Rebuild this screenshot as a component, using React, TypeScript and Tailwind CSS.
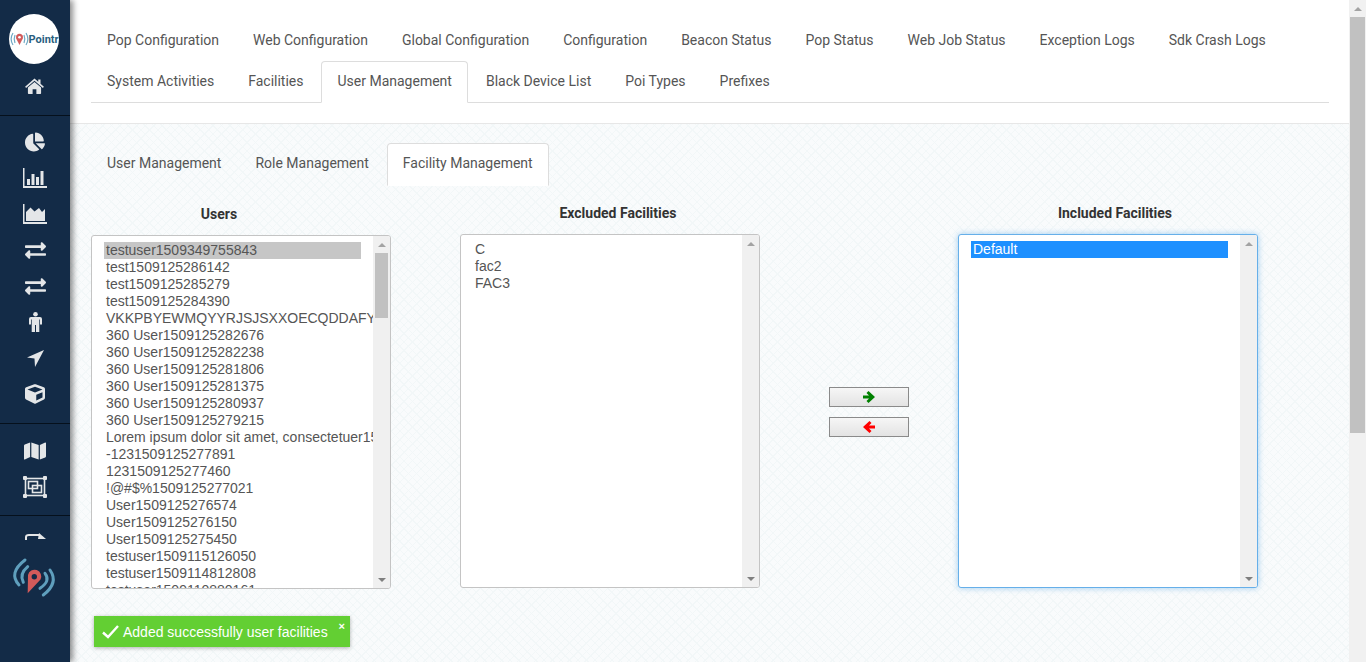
import { FaChartPie, FaCube, FaExchangeAlt, FaMap } from "react-icons/fa";

const mainTabs = [
  ["Pop Configuration", "Web Configuration", "Global Configuration", "Configuration", "Beacon Status", "Pop Status", "Web Job Status", "Exception Logs", "Sdk Crash Logs"],
  ["System Activities", "Facilities", "User Management", "Black Device List", "Poi Types", "Prefixes"],
];

const users = [
  "testuser1509349755843",
  "test1509125286142",
  "test1509125285279",
  "test1509125284390",
  "VKKPBYEWMQYYRJSJSXXOECQDDAFYZW",
  "360 User1509125282676",
  "360 User1509125282238",
  "360 User1509125281806",
  "360 User1509125281375",
  "360 User1509125280937",
  "360 User1509125279215",
  "Lorem ipsum dolor sit amet, consectetuer1509125278",
  "-1231509125277891",
  "1231509125277460",
  "!@#$%1509125277021",
  "User1509125276574",
  "User1509125276150",
  "User1509125275450",
  "testuser1509115126050",
  "testuser1509114812808",
  "testuser1509110880161",
];

function HomeIcon() {
  return (
    <svg width="19" height="16" viewBox="0 0 20 17" fill="currentColor">
      <path d="M10 0.5 L14 4 V1.6 H16.4 V6.2 L20 9.4 L18.9 10.5 L10 2.9 L1.1 10.5 L0 9.4 Z" />
      <path d="M10 4.2 L17 10.2 V16.2 Q17 17 16.2 17 H12 V12 H8 V17 H3.8 Q3 17 3 16.2 V10.2 Z" />
    </svg>
  );
}

function BarsIcon() {
  return (
    <svg width="24" height="20" viewBox="0 0 24 20" fill="currentColor">
      <path d="M0 0 H1.5 V18 H24 V20 H0 Z" />
      <rect x="4" y="11" width="3" height="6" />
      <rect x="8.5" y="6" width="3" height="11" />
      <rect x="13" y="9" width="3" height="8" />
      <rect x="17.5" y="3" width="3" height="14" />
    </svg>
  );
}

function AreaIcon() {
  return (
    <svg width="24" height="20" viewBox="0 0 24 20" fill="currentColor">
      <path d="M0 0 H1.5 V18 H24 V20 H0 Z" />
      <path d="M3 17 V8 L7.5 3.5 L11.5 7.5 L16 4 L19 8 L22 5 V17 Z" />
    </svg>
  );
}

function MaleIcon() {
  return (
    <svg width="13" height="20" viewBox="0 0 13 20" fill="currentColor">
      <circle cx="6.5" cy="2.3" r="2.3" />
      <path d="M2 5 H11 Q13 5 13 7 V12.5 H11 V7.5 H10.3 V20 H7 V13 H6 V20 H2.7 V7.5 H2 V12.5 H0 V7 Q0 5 2 5 Z" />
    </svg>
  );
}

function NavArrowIcon() {
  return (
    <svg width="17" height="17" viewBox="0 0 17 17" fill="currentColor">
      <path d="M17 0 L0 7.5 L7.5 8.5 L8 17 Z" />
    </svg>
  );
}

function GroupIcon() {
  return (
    <svg width="24" height="22" viewBox="0 0 24 22" fill="none" stroke="currentColor" strokeWidth="1.6">
      <rect x="2.5" y="2.5" width="19" height="17" />
      <rect x="5.5" y="5.5" width="9" height="7" />
      <rect x="9.5" y="9.5" width="9" height="7" />
      <g fill="currentColor" stroke="none">
        <rect x="0" y="0" width="4" height="4" rx="1" />
        <rect x="20" y="0" width="4" height="4" rx="1" />
        <rect x="0" y="18" width="4" height="4" rx="1" />
        <rect x="20" y="18" width="4" height="4" rx="1" />
      </g>
    </svg>
  );
}

function ShareStub() {
  return (
    <svg width="21" height="7" viewBox="0 0 21 7" fill="none">
      <path d="M1 7 V4 Q1 2 4 2 H14" stroke="currentColor" strokeWidth="2" />
      <path d="M14 0 L21 6 H13 Z" fill="currentColor" />
    </svg>
  );
}

function BroadcastLogo() {
  return (
    <svg width="60" height="50" viewBox="0 0 60 50" fill="none">
      <g stroke="#5f9fbd" strokeWidth="3" strokeLinecap="round">
        <path d="M20 5 Q3 18 14 30" />
        <path d="M22.7 11.7 Q14 19 18.3 27.3" />
        <path d="M40 18.3 Q46 26 35 33.3" />
        <path d="M45 15 Q54 28 38.3 40" />
      </g>
      <path d="M22.7 38.3 L23 20 A6.7 6.7 0 1 1 35.5 24.5 Z" fill="#d25a5a" />
      <circle cx="29.3" cy="21.7" r="2.7" fill="#132b47" />
    </svg>
  );
}

function BoldArrow({ className }: { className: string }) {
  return (
    <svg width="12" height="12" viewBox="0 0 12 12" fill="currentColor" className={className}>
      <path d="M0 4.5 H6 L3.5 2 L5.5 0 L12 6 L5.5 12 L3.5 10 L6 7.5 H0 Z" />
    </svg>
  );
}

function Row({ children }: { children: React.ReactNode }) {
  return <div className="flex h-9 items-center justify-center">{children}</div>;
}

function Sidebar() {
  return (
    <aside className="relative z-10 flex h-[662px] w-[70px] shrink-0 flex-col overflow-hidden bg-[#132b47] text-[#e4e6e8] shadow-[3px_0_6px_rgba(0,0,0,0.45)]">
      <div className="flex h-[116px] flex-col items-center border-b border-[#05101c] pr-[3px] pt-[14px]">
        <div className="flex h-[50px] w-[50px] items-center justify-start overflow-hidden rounded-full bg-white pl-[1px]">
          <svg width="19" height="14" viewBox="0 0 19 14" fill="none" className="shrink-0">
            <path d="M3 1 C0.5 5 0.5 9 3 13" stroke="#6fa8c4" strokeWidth="1.2" />
            <path d="M5 3 C3.8 6 3.8 8 5 11" stroke="#6fa8c4" strokeWidth="1.2" />
            <path d="M14 3 C15.2 6 15.2 8 14 11" stroke="#6fa8c4" strokeWidth="1.2" />
            <path d="M16 1 C18.5 5 18.5 9 16 13" stroke="#6fa8c4" strokeWidth="1.2" />
            <path d="M9.5 13 L6.2 6.5 A3.5 3.5 0 1 1 12.8 6.5 Z" fill="#d25a5a" />
            <circle cx="9.5" cy="5.2" r="1.3" fill="#fff" />
          </svg>
          <span className="font-['Roboto',sans-serif] text-[11px] font-bold leading-none text-[#2a5f7f]">Pointr</span>
        </div>
        <div className="mt-[14px] flex h-4 items-center pl-[1px]">
          <HomeIcon />
        </div>
      </div>
      <div className="flex h-[308px] flex-col border-b border-[#05101c] pt-2">
        <Row><FaChartPie size={20} /></Row>
        <Row><BarsIcon /></Row>
        <Row><AreaIcon /></Row>
        <Row><FaExchangeAlt size={21} /></Row>
        <Row><FaExchangeAlt size={21} /></Row>
        <Row><MaleIcon /></Row>
        <Row><NavArrowIcon /></Row>
        <Row><FaCube size={20} /></Row>
      </div>
      <div className="flex h-[92px] flex-col border-b border-[#05101c] pt-[9px]">
        <Row><FaMap size={22} /></Row>
        <Row><GroupIcon /></Row>
      </div>
      <div className="flex flex-col items-center">
        <div className="mt-[17px] flex h-[7px]">
          <ShareStub />
        </div>
        <div className="mt-[15px]">
          <BroadcastLogo />
        </div>
      </div>
    </aside>
  );
}

function Tab({ label, active }: { label: string; active?: boolean }) {
  return (
    <div
      className={
        "relative -mb-px mr-[2px] rounded-t border px-[15px] pb-[11px] pt-[9px] font-['Roboto',sans-serif] text-sm leading-5 text-[#555] " +
        (active ? "z-10 border-[#ddd] border-b-white bg-white" : "border-transparent")
      }
    >
      {label}
    </div>
  );
}

function ScrollTrack({ thumb }: { thumb?: boolean }) {
  return (
    <div className="flex w-[17px] shrink-0 flex-col items-center bg-[#f0f0f0]">
      <div className="flex h-[17px] shrink-0 items-center justify-center">
        <div className="h-0 w-0 border-x-[4px] border-b-[4px] border-x-transparent border-b-[#a3a3a3]" />
      </div>
      {thumb ? <div className="h-[65px] w-[13px] shrink-0 bg-[#c1c1c1]" /> : null}
      <div className="flex-1" />
      <div className="flex h-[17px] shrink-0 items-center justify-center">
        <div className="h-0 w-0 border-x-[4px] border-t-[4px] border-x-transparent border-t-[#7f7f7f]" />
      </div>
    </div>
  );
}

function ListBox({ children, focused, thumb }: { children: React.ReactNode; focused?: boolean; thumb?: boolean }) {
  return (
    <div
      className={
        "flex h-[354px] w-[300px] overflow-hidden rounded-[3px] border bg-white font-['Liberation_Sans',sans-serif] text-sm leading-[17px] text-[#555] " +
        (focused ? "border-[#66afe9] shadow-[0_0_6px_rgba(102,175,233,0.6)]" : "border-[#c4c4c4]")
      }
    >
      <div className="min-w-0 flex-1 overflow-hidden whitespace-nowrap pl-3 pt-[6px]">{children}</div>
      <ScrollTrack thumb={thumb} />
    </div>
  );
}

function MoveButton({ children }: { children: React.ReactNode }) {
  return (
    <div className="flex h-[20px] w-[80px] items-center justify-center border border-[#8a8a8a] bg-gradient-to-b from-[#f6f6f6] to-[#e3e3e3]">
      {children}
    </div>
  );
}

export default function App() {
  return (
    <div className="relative flex h-[662px] w-[1366px] overflow-hidden bg-white">
      <Sidebar />
      <main className="flex h-[662px] w-[1279px] flex-col">
        <header className="h-[124px] shrink-0 border-b border-[#e7e7e7] bg-white pl-[21px] pr-5 pt-5">
          <div className="border-b border-[#ddd]">
            {mainTabs.map((row) => (
              <div key={row[0]} className="flex">
                {row.map((t) => (
                  <Tab key={t} label={t} active={t === "User Management"} />
                ))}
              </div>
            ))}
          </div>
        </header>
        <section className="flex-1 bg-[#f9fbfc] bg-[repeating-linear-gradient(45deg,#f2f7f8_0,#f2f7f8_1px,transparent_1px,transparent_6px),repeating-linear-gradient(-45deg,#f2f7f8_0,#f2f7f8_1px,transparent_1px,transparent_6px)] pl-[21px] pt-[19px]">
          <div className="flex h-[42px]">
            <Tab label="User Management" />
            <Tab label="Role Management" />
            <Tab label="Facility Management" active />
          </div>
          <div className="flex pt-5 font-['Roboto',sans-serif]">
            <div className="mr-[69px] w-[300px]">
              <h3 className="mb-[12px] pr-[44px] pt-px text-center text-sm font-bold leading-[17px] text-[#333]">Users</h3>
              <ListBox thumb>
                <div className="w-[257px] bg-[#c6c6c6] pl-[2px]">{users[0]}</div>
                {users.slice(1).map((u) => (
                  <div key={u} className="pl-[2px]">{u}</div>
                ))}
              </ListBox>
            </div>
            <div className="mr-[69px] w-[300px]">
              <h3 className="mb-[12px] pl-4 text-center text-sm font-bold leading-[17px] text-[#333]">Excluded Facilities</h3>
              <ListBox>
                <div className="pl-[2px]">C</div>
                <div className="pl-[2px]">fac2</div>
                <div className="pl-[2px]">FAC3</div>
              </ListBox>
            </div>
            <div className="mr-[49px] flex w-[80px] flex-col gap-[10px] pt-[182px]">
              <MoveButton><BoldArrow className="text-[#008000]" /></MoveButton>
              <MoveButton><BoldArrow className="rotate-180 text-[#ff0000]" /></MoveButton>
            </div>
            <div className="w-[300px]">
              <h3 className="mb-[12px] pl-[14px] text-center text-sm font-bold leading-[17px] text-[#333]">Included Facilities</h3>
              <ListBox focused>
                <div className="w-[257px] bg-[#1e90ff] pl-[2px] text-white">Default</div>
              </ListBox>
            </div>
          </div>
        </section>
      </main>
      <div className="flex h-[662px] w-[17px] shrink-0 flex-col items-center bg-[#f1f1f1]">
        <div className="flex h-[17px] shrink-0 items-center justify-center">
          <div className="h-0 w-0 border-x-[4px] border-b-[4px] border-x-transparent border-b-[#a3a3a3]" />
        </div>
        <div className="h-[416px] w-[15px] bg-[#c1c1c1]" />
      </div>
      <div className="absolute left-[94px] top-[616px] z-20 flex h-[31px] w-[256px] items-center bg-[#63cf33] pl-2 font-['Liberation_Sans',sans-serif] text-sm text-white shadow-[0_1px_4px_rgba(0,0,0,0.3)]">
        <svg width="17" height="14" viewBox="0 0 17 14" fill="none" stroke="currentColor" strokeWidth="2.4">
          <path d="M1 7.5 L6 12 L16 1" />
        </svg>
        <span className="ml-[4px]">Added successfully user facilities</span>
        <span className="absolute right-[5px] top-[2px] text-[11px] font-bold leading-4">×</span>
      </div>
    </div>
  );
}
